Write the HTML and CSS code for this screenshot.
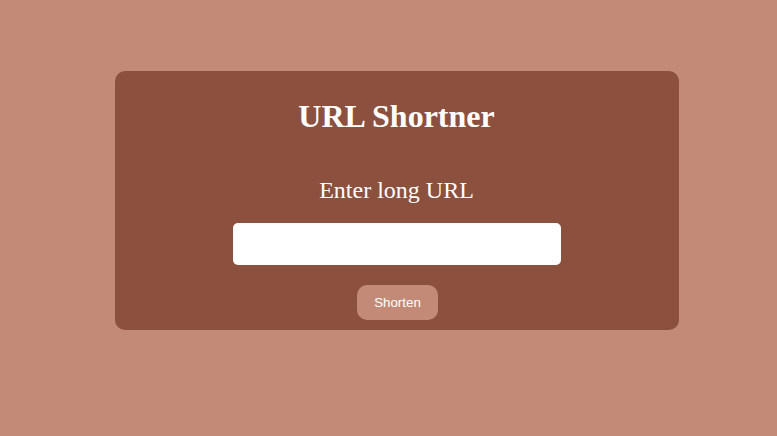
FILE: index.html
```html
<!DOCTYPE html>
<html>
<head>
<meta charset="utf-8">
<title>URL Shortner</title>
<link rel="stylesheet" href="styles.css">
</head>
<body>
<main class="card">
  <h1 class="title">URL Shortner</h1>
  <label class="label" for="url">Enter long URL</label>
  <input class="url-input" id="url" type="text">
  <button class="btn">Shorten</button>
</main>
</body>
</html>
```
FILE: styles.css
```css
html, body {
  margin: 0;
  padding: 0;
}
body {
  background: #c38b77;
  font-family: "Liberation Serif", "Times New Roman", serif;
  display: flex;
  justify-content: center;
  align-items: flex-start;
  height: 436px;
}
.card {
  margin-top: 71px;
  margin-left: 16px;
  width: 564px;
  box-sizing: border-box;
  height: 259px;
  background: #8c503e;
  border-radius: 10px;
  display: flex;
  flex-direction: column;
  align-items: center;
  padding-top: 27px;
  color: #fff;
}
.title {
  margin: 0;
  font-size: 32px;
  font-weight: bold;
  line-height: 36px;
}
.label {
  margin-top: 42px;
  font-size: 24px;
  line-height: 28px;
}
.url-input {
  margin-top: 19px;
  width: 328px;
  height: 42px;
  box-sizing: border-box;
  border: none;
  border-radius: 5px;
  background: #fff;
  outline: none;
}
.btn {
  margin-top: 20px;
  margin-left: 2px;
  width: 81px;
  height: 35px;
  border: none;
  border-radius: 10px;
  background: #c38b77;
  color: #fff;
  font-family: "Liberation Sans", Arial, sans-serif;
  font-size: 13.333px;
  padding: 0;
}
```
